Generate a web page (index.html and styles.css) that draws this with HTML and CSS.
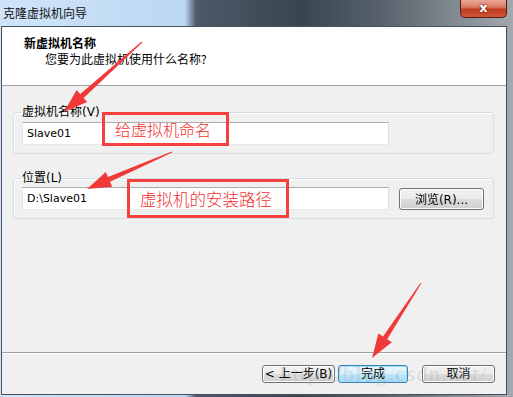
FILE: index.html
```html
<!DOCTYPE html>
<html lang="zh-CN">
<head>
  <meta charset="UTF-8" />
  <title>克隆虚拟机向导</title>
  <link rel="stylesheet" href="styles.css">
</head>
<body>
  <div class="window">
    <div class="titlebar">
      <span class="title">克隆虚拟机向导</span>
      <span class="close">x</span>
    </div>

    <div class="client">
      <div class="header">
        <div class="h-title">新虚拟机名称</div>
        <div class="h-sub">您要为此虚拟机使用什么名称?</div>
      </div>

      <div class="main">
        <fieldset class="group">
          <legend>虚拟机名称(V)</legend>
          <input class="text" type="text" value="Slave01" />
        </fieldset>

        <fieldset class="group">
          <legend>位置(L)</legend>
          <div class="row">
            <input class="text" type="text" value="D:\Slave01" />
            <button class="btn browse">浏览(R)...</button>
          </div>
        </fieldset>
      </div>

      <div class="footer">
        <button class="btn nav">&lt; 上一步(B)</button>
        <button class="btn nav default">完成</button>
        <button class="btn nav cancel">取消</button>
      </div>
    </div>
  </div>

  <!-- annotations drawn over the screenshot -->
  <div class="note note-name">给虚拟机命名</div>
  <div class="note note-path">虚拟机的安装路径</div>

  <svg class="arrows" width="513" height="397" viewBox="0 0 513 397">
    <polygon points="142.3,42.4 83.6,97.9 87.2,102.0 64,112 76.6,90.0 80.2,94.1 141.7,41.6" />
    <polygon points="172.2,152.5 110.0,181.7 112.2,186.7 87,189 105.8,172.1 108.0,177.1 171.8,151.5" />
    <polygon points="421.4,283.3 387.2,339.3 391.8,342.3 372,358 378.4,333.5 383.0,336.5 420.6,282.7" />
  </svg>

  <div class="watermark">http://blog.csdn.net/</div>
</body>
</html>
```

FILE: styles.css
```css
* {
  box-sizing: border-box;
}
body {
  margin: 0;
  width: 513px;
  height: 397px;
  overflow: hidden;
  position: relative;
  font-family: "DejaVu Sans", "Noto Sans CJK SC", sans-serif;
  font-size: 12px;
  color: #000;
}
.window {
  width: 513px;
  height: 397px;
  display: flex;
  flex-direction: column;
  background: linear-gradient(to right, #cfe4f8 0, #bcd7f2 185px, #4c5a69 196px, #39454f 300px, #56616b 380px, #8a9299 470px, #a3a9ae 513px);
}
.titlebar {
  height: 26px;
  display: flex;
  align-items: flex-start;
}
.title {
  padding: 5px 0 0 3px;
  line-height: 16px;
  font-family: "Noto Sans CJK SC", sans-serif;
  font-size: 12px;
  color: #111;
}
.close {
  margin-left: auto;
  margin-right: 6px;
  width: 47px;
  height: 18px;
  border: 1px solid #5a1d14;
  border-top: none;
  border-radius: 0 0 5px 5px;
  background: linear-gradient(#eaa896, #d97a63 42%, #c13b20 55%, #d0553a);
  color: #fff;
  font-family: "DejaVu Sans", sans-serif;
  font-weight: bold;
  font-size: 13px;
  line-height: 15px;
  text-align: center;
  text-shadow: 0 0 2px #3a0a05;
}
.client {
  width: 506px;
  height: 369px;
  margin-left: 1px;
  border: 1px solid #46505c;
  background: #f0f0f0;
  display: flex;
  flex-direction: column;
}
.header {
  height: 59px;
  background: #fff;
  border-bottom: 1px solid #a0a0a0;
  padding: 8px 0 0 22px;
  font-family: "Noto Sans CJK SC", sans-serif;
  line-height: 16px;
}
.h-title {
  font-weight: bold;
}
.h-sub {
  margin-left: 21px;
}
.main {
  flex: 1;
  padding: 19px 12px 0 11px;
}
.group {
  margin: 0;
  padding: 3px 9px 8px 8px;
  border: 1px solid #d5dfe5;
  border-radius: 3px;
  box-shadow: inset 1px 1px #fff;
}
.group + .group {
  margin-top: 17px;
  padding-top: 2px;
}
.group legend {
  padding: 0;
  line-height: 14px;
}
.text {
  display: block;
  width: 367px;
  height: 23px;
  margin: 0;
  padding: 0 4px;
  border: 1px solid;
  border-color: #abadb3 #dbdfe6 #e3e9ef #e2e3ea;
  background: #fff;
  font-family: "DejaVu Sans", "Noto Sans CJK SC", sans-serif;
  font-size: 11px;
  color: #000;
}
.row {
  display: flex;
  align-items: center;
  gap: 10px;
}
.btn {
  margin: 0;
  padding: 0;
  border: 1px solid #707070;
  border-radius: 3px;
  background: linear-gradient(#f2f2f2, #ebebeb 50%, #dddddd 50%, #cfcfcf);
  box-shadow: inset 0 0 0 1px #fcfcfc;
  font-family: "DejaVu Sans", "Noto Sans CJK SC", sans-serif;
  font-size: 12px;
  color: #000;
}
.browse {
  width: 85px;
  height: 22px;
}
.footer {
  height: 42px;
  border-top: 1px solid #a0a0a0;
  box-shadow: inset 0 1px #fff;
  padding: 12px 11px 0 0;
  display: flex;
  justify-content: flex-end;
  align-items: flex-start;
  gap: 3px;
}
.nav {
  width: 73px;
  height: 18px;
  line-height: 14px;
}
.default {
  width: 70px;
  border-color: #3c7fb1;
  background: linear-gradient(#eaf6fd, #d9f0fc 50%, #bee6fd 50%, #a7d9f5);
  box-shadow: inset 0 0 0 1px #9de0fc;
}
.cancel {
  margin-left: 11px;
}
.note {
  position: absolute;
  border: 3px solid #f4403f;
  color: #f0302f;
  font-family: "Noto Sans CJK SC", sans-serif;
  font-weight: 300;
  font-size: 16px;
  line-height: 20px;
}
.note-name {
  left: 102px;
  top: 112px;
  width: 127px;
  height: 34px;
  padding: 4px 0 0 10px;
}
.note-path {
  left: 127px;
  top: 179px;
  width: 162px;
  height: 39px;
  padding: 7px 0 0 10px;
  font-size: 16.5px;
}
.arrows {
  position: absolute;
  left: 0;
  top: 0;
  pointer-events: none;
}
.arrows polygon {
  fill: #f2393a;
}
.watermark {
  position: absolute;
  left: 280px;
  top: 361px;
  font-family: "Liberation Serif", serif;
  font-size: 22px;
  letter-spacing: 1.5px;
  color: rgba(170, 170, 170, 0.32);
  pointer-events: none;
}
```
